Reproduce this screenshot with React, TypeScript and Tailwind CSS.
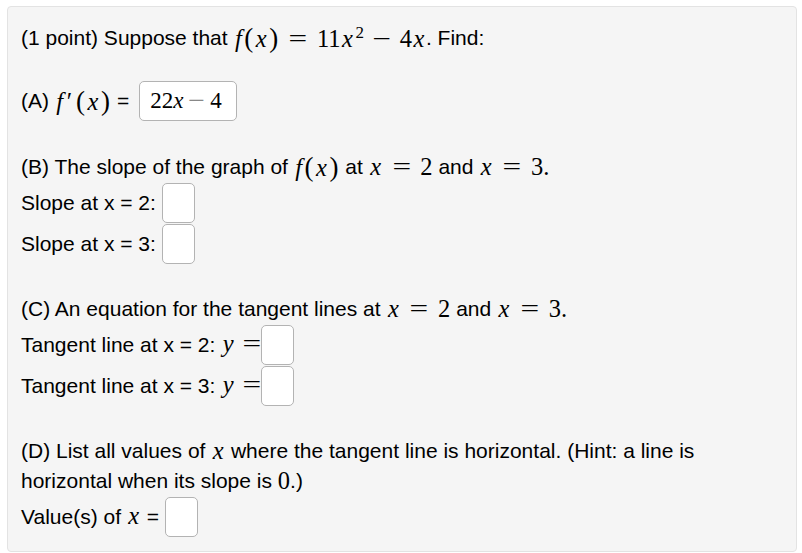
import React from 'react';

const sans = "font-['Liberation_Sans',Arial,sans-serif]";
const serif = "font-['Liberation_Serif','Times_New_Roman',serif]";

function M({ children }: { children: React.ReactNode }) {
  return <span className={`${serif} text-[24.5px] leading-none whitespace-nowrap`}>{children}</span>;
}

// italic variable, padded a bit to get closer to math-italic widths
function V({ children }: { children: React.ReactNode }) {
  return <i className="italic inline-block px-[1.5px]">{children}</i>;
}

// TeX parens run taller than Times ones
function P({ c }: { c: string }) {
  return <span className="text-[27px] leading-none px-[1px]">{c}</span>;
}

// relation / binary operator with math spacing, stretched like the TeX glyphs
function Op({ c = '=' }: { c?: string }) {
  return <span className="inline-block mx-[12px] scale-x-[1.35]">{c}</span>;
}

function Fx() {
  return (
    <>
      <V>f</V>
      <P c="(" />
      <V>x</V>
      <P c=")" />
    </>
  );
}

function Box({ children, w = 'w-[33px]' }: { children?: React.ReactNode; w?: string }) {
  return (
    <span className={`inline-flex items-center h-[40px] ${w} bg-white border border-[#b3b3b3] rounded-[5px] px-[10px]`}>
      {children}
    </span>
  );
}

export default function App() {
  return (
    <div className={`${sans} text-[21px] text-black bg-white w-[802px] h-[553px] pt-[6px] pl-[7px]`}>
      <div className="w-[790px] h-[546px] bg-[#f5f5f5] border border-[#e3e3e3] rounded-[4px] pl-[13px] pt-[11px]">
        <div className="flex items-center h-[40px]">
          <span>(1 point) Suppose that&nbsp;</span>
          <M>
            <Fx />
            <Op />11<V>x</V>
            <sup className="text-[17px] ml-[1px]">2</sup>
            <span className="inline-block ml-[11px] mr-[11px] scale-x-[1.35]">−</span>4<V>x</V>
          </M>
          <span>. Find:</span>
        </div>

        <div className="flex items-center h-[40px] mt-[23px]">
          <span>(A)&nbsp;</span>
          <M>
            <V>f</V>
            <span className="ml-[2px] mr-[3px]">′</span>
            <P c="(" />
            <V>x</V>
            <P c=")" />
          </M>
          <span className="ml-[6px] mr-[10px]">=</span>
          <Box w="w-[98px]">
            <span className={`${serif} text-[23px] whitespace-nowrap`}>
              22<i className="italic">x</i>
              <span className="inline-block text-[#888] mx-[7px] scale-x-[1.3]">−</span>4
            </span>
          </Box>
        </div>

        <div className="flex items-center h-[30px] mt-[31px]">
          <span>(B) The slope of the graph of&nbsp;</span>
          <M>
            <Fx />
          </M>
          <span>&nbsp;at&nbsp;</span>
          <M>
            <V>x</V>
            <Op />2
          </M>
          <span>&nbsp;and&nbsp;</span>
          <M>
            <V>x</V>
            <Op />3.
          </M>
        </div>
        <div className="flex items-center h-[41px]">
          <span>Slope at x = 2:&nbsp;</span>
          <Box />
        </div>
        <div className="flex items-center h-[41px]">
          <span>Slope at x = 3:&nbsp;</span>
          <Box />
        </div>

        <div className="flex items-center h-[30px] mt-[30px]">
          <span>(C) An equation for the tangent lines at&nbsp;</span>
          <M>
            <V>x</V>
            <Op />2
          </M>
          <span>&nbsp;and&nbsp;</span>
          <M>
            <V>x</V>
            <Op />3.
          </M>
        </div>
        <div className="flex items-center h-[41px]">
          <span>Tangent line at x = 2:&nbsp;</span>
          <M>
            <V>y</V>
            <span className="inline-block ml-[10px] mr-[2px] scale-x-[1.35]">=</span>
          </M>
          <Box />
        </div>
        <div className="flex items-center h-[41px]">
          <span>Tangent line at x = 3:&nbsp;</span>
          <M>
            <V>y</V>
            <span className="inline-block ml-[10px] mr-[2px] scale-x-[1.35]">=</span>
          </M>
          <Box />
        </div>

        <div className="mt-[30px]">
          <div className="flex items-center h-[30px]">
            <span>(D) List all values of&nbsp;</span>
            <M>
              <V>x</V>
            </M>
            <span>&nbsp;where the tangent line is horizontal. (Hint: a line is</span>
          </div>
          <div className="flex items-center h-[30px]">
            <span>horizontal when its slope is&nbsp;</span>
            <M>0</M>
            <span>.)</span>
          </div>
        </div>
        <div className="flex items-center h-[41px]">
          <span>Value(s) of&nbsp;</span>
          <M>
            <V>x</V>
          </M>
          <span className="ml-[6px] mr-[6px]">=</span>
          <Box />
        </div>
      </div>
    </div>
  );
}
